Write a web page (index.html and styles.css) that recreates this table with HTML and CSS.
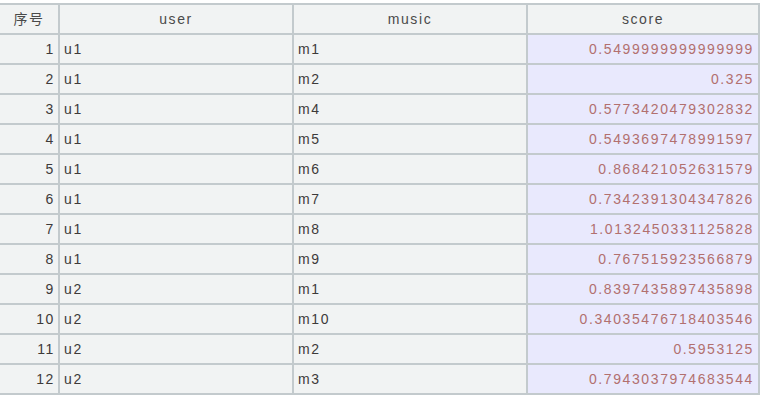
FILE: index.html
```html
<!DOCTYPE html>
<html>
<head>
<meta charset="utf-8">
<link rel="stylesheet" href="styles.css">
</head>
<body>
<table class="grid">
<colgroup><col class="c-idx"><col class="c-user"><col class="c-music"><col class="c-score"></colgroup>
<thead>
<tr><th>序号</th><th>user</th><th>music</th><th>score</th></tr>
</thead>
<tbody>
<tr><td class="idx">1</td><td>u1</td><td>m1</td><td class="score">0.5499999999999999</td></tr>
<tr><td class="idx">2</td><td>u1</td><td>m2</td><td class="score">0.325</td></tr>
<tr><td class="idx">3</td><td>u1</td><td>m4</td><td class="score">0.5773420479302832</td></tr>
<tr><td class="idx">4</td><td>u1</td><td>m5</td><td class="score">0.5493697478991597</td></tr>
<tr><td class="idx">5</td><td>u1</td><td>m6</td><td class="score">0.868421052631579</td></tr>
<tr><td class="idx">6</td><td>u1</td><td>m7</td><td class="score">0.7342391304347826</td></tr>
<tr><td class="idx">7</td><td>u1</td><td>m8</td><td class="score">1.0132450331125828</td></tr>
<tr><td class="idx">8</td><td>u1</td><td>m9</td><td class="score">0.767515923566879</td></tr>
<tr><td class="idx">9</td><td>u2</td><td>m1</td><td class="score">0.8397435897435898</td></tr>
<tr><td class="idx">10</td><td>u2</td><td>m10</td><td class="score">0.34035476718403546</td></tr>
<tr><td class="idx">11</td><td>u2</td><td>m2</td><td class="score">0.5953125</td></tr>
<tr><td class="idx">12</td><td>u2</td><td>m3</td><td class="score">0.7943037974683544</td></tr>
</tbody>
</table>
</body>
</html>
```
FILE: styles.css
```css
html, body {
  margin: 0;
  padding: 0;
  background: #ffffff;
}
body {
  padding-top: 3px;
  font-family: "Liberation Sans", Arial, "Noto Sans CJK SC", sans-serif;
  font-size: 14px;
}
.grid {
  table-layout: fixed;
  border-collapse: collapse;
  width: 759px;
  background: #f1f3f3;
}
.c-idx { width: 59px; }
.c-user { width: 234px; }
.c-music { width: 234px; }
.c-score { width: 232px; }
.grid th, .grid td {
  border: 2px solid #c3cacd;
  height: 28px;
  padding: 0 4px;
  line-height: 28px;
  white-space: nowrap;
  overflow: hidden;
  color: #3d3a3a;
  letter-spacing: 1.6px;
}
.grid th {
  font-weight: normal;
  text-align: center;
  color: #4a4a4a;
}
.grid td.idx {
  text-align: right;
  padding-right: 3px;
}
.grid td.score {
  text-align: right;
  background: #e9e9fd;
  color: #b2706f;
  padding-right: 4px;
}
.grid tr > :first-child { border-left: none; }
```
